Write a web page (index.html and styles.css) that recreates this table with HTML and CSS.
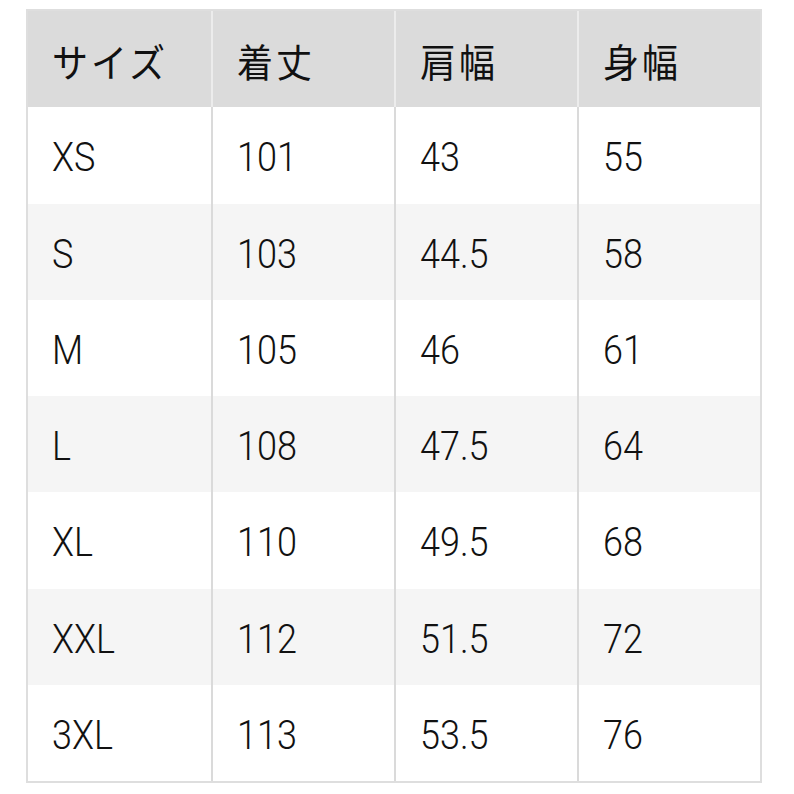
FILE: index.html
```html
<!DOCTYPE html>
<html lang="ja">
<head>
<meta charset="utf-8">
<link rel="stylesheet" href="styles.css">
</head>
<body>
<div class="size-table">
  <div class="row head">
    <div class="cell"><span>サイズ</span></div>
    <div class="cell"><span>着丈</span></div>
    <div class="cell"><span>肩幅</span></div>
    <div class="cell"><span>身幅</span></div>
  </div>
  <div class="row">
    <div class="cell"><span>XS</span></div>
    <div class="cell"><span>101</span></div>
    <div class="cell"><span>43</span></div>
    <div class="cell"><span>55</span></div>
  </div>
  <div class="row alt">
    <div class="cell"><span>S</span></div>
    <div class="cell"><span>103</span></div>
    <div class="cell"><span>44.5</span></div>
    <div class="cell"><span>58</span></div>
  </div>
  <div class="row">
    <div class="cell"><span>M</span></div>
    <div class="cell"><span>105</span></div>
    <div class="cell"><span>46</span></div>
    <div class="cell"><span>61</span></div>
  </div>
  <div class="row alt">
    <div class="cell"><span>L</span></div>
    <div class="cell"><span>108</span></div>
    <div class="cell"><span>47.5</span></div>
    <div class="cell"><span>64</span></div>
  </div>
  <div class="row">
    <div class="cell"><span>XL</span></div>
    <div class="cell"><span>110</span></div>
    <div class="cell"><span>49.5</span></div>
    <div class="cell"><span>68</span></div>
  </div>
  <div class="row alt">
    <div class="cell"><span>XXL</span></div>
    <div class="cell"><span>112</span></div>
    <div class="cell"><span>51.5</span></div>
    <div class="cell"><span>72</span></div>
  </div>
  <div class="row">
    <div class="cell"><span>3XL</span></div>
    <div class="cell"><span>113</span></div>
    <div class="cell"><span>53.5</span></div>
    <div class="cell"><span>76</span></div>
  </div>
</div>
</body>
</html>
```
FILE: styles.css
```css
html, body {
  margin: 0;
  padding: 0;
  background: #ffffff;
}

body {
  font-family: Roboto, "Noto Sans CJK JP", sans-serif;
  color: #111111;
}

.size-table {
  box-sizing: border-box;
  margin: 9px 0 0 26px;
  width: 736px;
  height: 774px;
  border: 2px solid #dedede;
  display: grid;
  grid-template-rows: repeat(8, 1fr);
}

.row {
  display: grid;
  grid-template-columns: repeat(4, 1fr);
  background: #ffffff;
}

.row.alt {
  background: #f5f5f5;
}

.row.head {
  background: #dbdbdb;
}

.cell {
  display: flex;
  align-items: center;
  padding: 4px 0 0 24px;
  border-left: 2px solid #dadada;
  font-size: 36px;
  font-weight: 300;
  line-height: 1;
}

.cell:first-child {
  border-left: none;
}

.row.head .cell {
  border-left-color: #ececec;
  padding-top: 2px;
}

.row.head .cell:first-child {
  border-left: none;
}

.cell span {
  display: inline-block;
  transform: scaleY(1.15);
}

.row.head .cell span {
  font-family: "Noto Sans CJK JP", sans-serif;
  font-size: 36px;
  font-weight: 400;
  letter-spacing: 3px;
  transform: scaleY(1.08);
}
```
